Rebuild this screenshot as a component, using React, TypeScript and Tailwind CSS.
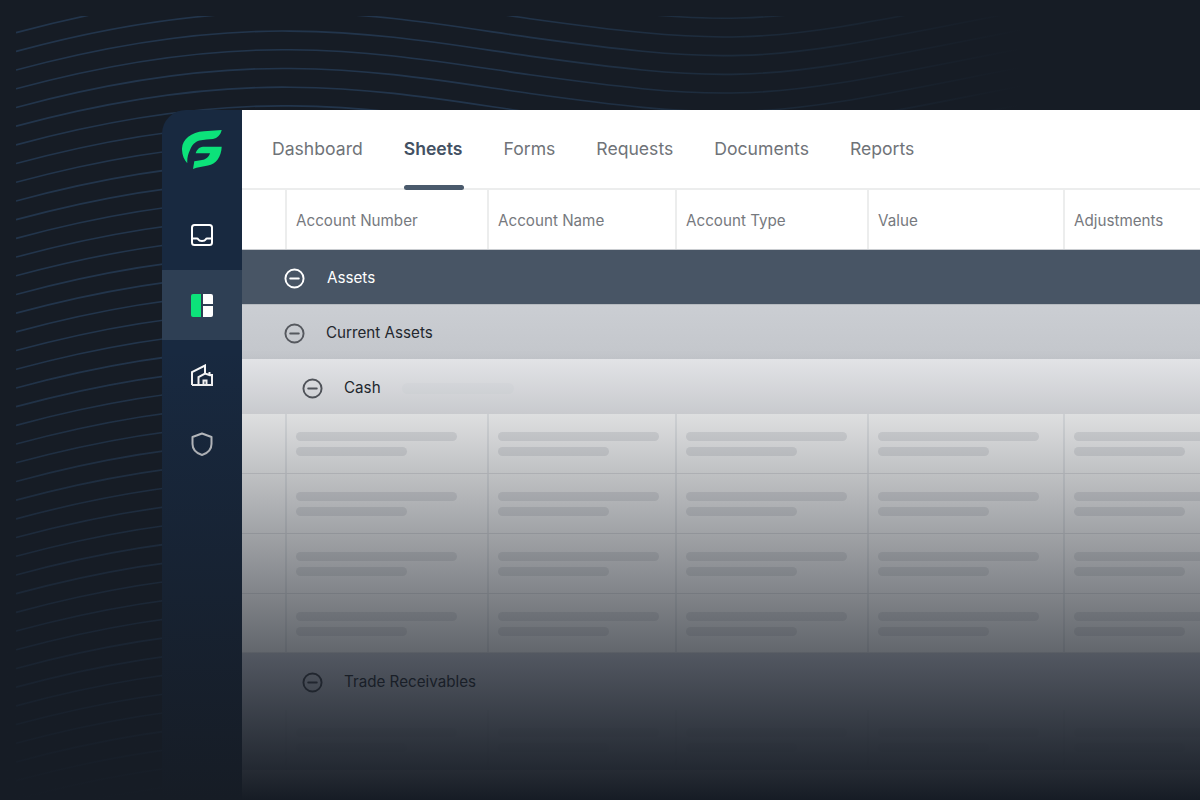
import React from 'react';

const tabs = ['Dashboard', 'Sheets', 'Forms', 'Requests', 'Documents', 'Reports'];

const columns = [
  { label: 'Account Number', width: 'w-[202px]' },
  { label: 'Account Name', width: 'w-[188px]' },
  { label: 'Account Type', width: 'w-[192px]' },
  { label: 'Value', width: 'w-[196px]' },
  { label: 'Adjustments', width: 'w-[200px]' },
];

// wave lines behind the panel, every one is the same curve shifted down
const waves = Array.from({ length: 44 }, (_, i) => -2 + i * 18.7);

const wavePath = (y: number) =>
  `M0 ${y} C 74 ${y - 20}, 174 ${y - 40}, 274 ${y - 39} C 364 ${y - 38}, 424 ${y - 27}, 514 ${y - 14} C 594 ${y - 3}, 664 ${y + 6}, 724 ${y + 4} C 814 ${y + 2}, 904 ${y - 22}, 1084 ${y - 55}`;

const MinusCircle = ({ className }: { className: string }) => (
  <svg viewBox="0 0 22 22" fill="none" stroke="currentColor" strokeWidth="2" className={className}>
    <circle cx="11" cy="11" r="9.5" />
    <path d="M6.5 11h9" strokeLinecap="round" />
  </svg>
);

const Logo = () => (
  <svg viewBox="0 0 40 40" className="h-10 w-10">
    <path
      fill="#0ce27a"
      d="M39.700 0 L22 1.200 C9 2 0.500 9.500 0 18.300 C-0.200 24.500 2 30 5.300 33.300 C5 28 6 24.500 8 20 C10 15 13 11.500 17.500 10.500 C22 9.500 27 9.500 31 9 C35.500 8.200 38.500 5 39.700 0 Z"
    />
    <path
      fill="#0ce27a"
      d="M39.700 16.700 L21 16.700 C17 17 14.500 20 13.700 23.300 L28 23.300 C27 27 24 29.500 20 30 L12.300 31.200 L11 39 C15.500 37 21 36.500 26 35.500 C34 34 39.300 27 39.700 16.700 Z"
    />
  </svg>
);

const Skeleton = ({ faint }: { faint?: boolean }) => (
  <div className="flex flex-col gap-[6px] pl-[9px] pt-[18px]">
    <div className={`h-[9px] w-[161px] rounded-full ${faint ? 'bg-[#c9ccd7]' : 'bg-[#e9eaec]'}`} />
    <div className={`h-[9px] w-[111px] rounded-full ${faint ? 'bg-[#c9ccd7]' : 'bg-[#e9eaec]'}`} />
  </div>
);

const SkeletonRow = ({ faint, height = 'h-[60px]' }: { faint?: boolean; height?: string }) => (
  <div className={`flex ${height} ${faint ? 'bg-[#d0d3de]' : 'border-b border-[#e6e7e9]'}`}>
    <div className="w-[43px] shrink-0" />
    {columns.map((col) => (
      <div
        key={col.label}
        className={`${col.width} shrink-0 border-l-2 ${faint ? 'border-[#c9ccd7]' : 'border-[#eceef0]'}`}
      >
        <Skeleton faint={faint} />
      </div>
    ))}
  </div>
);

export default function App() {
  return (
    <div className="relative h-[800px] w-[1200px] overflow-hidden bg-[#161c25] pt-[110px] font-['Inter',sans-serif]">
      {/* Waves */}
      <svg className="absolute left-[16px] top-[16px] h-[784px] w-[1184px]" viewBox="0 0 1184 784" fill="none">
        <defs>
          <linearGradient id="waveFade" gradientUnits="userSpaceOnUse" x1="0" y1="0" x2="1184" y2="0">
            <stop offset="0" stopColor="#22354c" />
            <stop offset="0.4" stopColor="#22354c" />
            <stop offset="0.62" stopColor="#1c2a3a" />
            <stop offset="0.85" stopColor="#161c25" />
          </linearGradient>
        </defs>
        {waves.map((y) => (
          <path key={y} d={wavePath(y)} stroke="url(#waveFade)" strokeWidth="1.6" />
        ))}
      </svg>

      {/* App window */}
      <div className="relative ml-[162px] flex h-[690px]">
        <aside className="flex w-[80px] shrink-0 flex-col items-center rounded-tl-[24px] bg-[#182940]">
          <div className="mt-[20px] h-10 w-10">
            <Logo />
          </div>
          <div className="mt-[30px] flex h-[70px] w-full items-center justify-center">
            <svg viewBox="0 0 22 22" fill="none" stroke="#fff" strokeWidth="2" className="h-[22px] w-[22px]">
              <rect x="1" y="1" width="20" height="20" rx="2.5" />
              <path d="M1 14.500h5c.8 0 1 .5 1.300 1 .5.8 1.400 1.500 3.700 1.500s3.200-.7 3.700-1.500c.3-.5.5-1 1.300-1h5" />
            </svg>
          </div>
          <div className="flex h-[70px] w-full items-center justify-center bg-[#2e3f54]">
            <div className="flex h-[23px] w-[22px] gap-[2px]">
              <div className="w-[10px] rounded-l-[2px] bg-[#0ce27a]" />
              <div className="flex w-[10px] flex-col gap-[2px]">
                <div className="flex-1 rounded-tr-[2px] bg-white" />
                <div className="flex-1 rounded-br-[2px] bg-white" />
              </div>
            </div>
          </div>
          <div className="flex h-[70px] w-full items-center justify-center">
            <svg viewBox="0 0 22 22" fill="none" stroke="#fff" strokeWidth="2" className="h-[22px] w-[22px]">
              <path d="M1 21V8L14 1.500V9" />
              <path d="M7.500 21v-8l6.500-3.500 4.500 1.500V8" />
              <path d="M18.500 11H21v10H1" />
              <path d="M12.500 21v-4.500h3V21" />
            </svg>
          </div>
          <div className="flex h-[70px] w-full items-center justify-center">
            <svg viewBox="0 0 24 24" fill="none" stroke="#d8dadd" strokeWidth="2" className="mb-[2px] h-6 w-6">
              <path d="M12 1.500 21.500 5v7c0 5.500-3.800 9.200-9.500 11C6.300 21.200 2.500 17.500 2.500 12V5z" strokeLinejoin="round" />
            </svg>
          </div>
        </aside>

        <main className="min-w-0 flex-1 overflow-hidden bg-white">
          {/* Tabs */}
          <nav className="flex h-[80px] gap-[41px] border-b-2 border-[#eceded] pl-[30px]">
            {tabs.map((tab) =>
              tab === 'Sheets' ? (
                <div key={tab} className="relative flex items-center text-[17.6px] font-semibold text-[#435163]">
                  {tab}
                  <div className="absolute bottom-[-2px] left-0 h-[5px] w-[60px] rounded-full bg-[#4a5a6c]" />
                </div>
              ) : (
                <div key={tab} className="flex items-center text-[17.6px] text-[#6f7378]">
                  {tab}
                </div>
              ),
            )}
          </nav>

          {/* Header row */}
          <div className="flex h-[60px] border-b border-[#c9ccd0]">
            <div className="w-[43px] shrink-0" />
            {columns.map((col) => (
              <div
                key={col.label}
                className={`${col.width} flex shrink-0 items-center border-l-2 border-[#eceded] pl-[9px] pt-[4px] text-[15.2px] text-[#76797e]`}
              >
                {col.label}
              </div>
            ))}
          </div>

          <div className="flex h-[54px] items-center gap-[22px] bg-[#485565] pl-[42px] pt-[3px] text-[15.2px] text-white">
            <MinusCircle className="h-[21px] w-[21px] text-white" />
            Assets
          </div>
          <div className="flex h-[55px] items-center gap-[21px] border-t border-[#b6babf] bg-gradient-to-b from-[#cbced3] to-[#c3c6cb] pl-[42px] pt-[2px] text-[15.2px] text-[#23272e]">
            <MinusCircle className="h-[21px] w-[21px] text-[#55585e]" />
            Current Assets
          </div>
          <div className="flex h-[55px] items-center gap-[21px] bg-[#e6e7ea] pl-[60px] pt-[3px] text-[15.2px] text-[#23272e]">
            <MinusCircle className="h-[21px] w-[21px] text-[#55585e]" />
            Cash
            <div className="h-[11px] w-[112px] rounded-full bg-[#e2e4e7]" />
          </div>

          <SkeletonRow />
          <SkeletonRow />
          <SkeletonRow />
          <SkeletonRow height="h-[59px]" />

          <div className="flex h-[57px] items-center gap-[21px] bg-[#d0d3de] pl-[60px] pt-[1px] text-[15.2px] text-[#23272e]">
            <MinusCircle className="h-[21px] w-[21px] text-[#3d4048]" />
            <span className="pt-[1px]">Trade Receivables</span>
          </div>

          <SkeletonRow faint />
        </main>
      </div>

      {/* Fade to the page colour */}
      <div className="absolute inset-x-0 bottom-0 h-[450px] bg-gradient-to-b from-[#161c25]/0 to-[#161c25]" />
    </div>
  );
}
